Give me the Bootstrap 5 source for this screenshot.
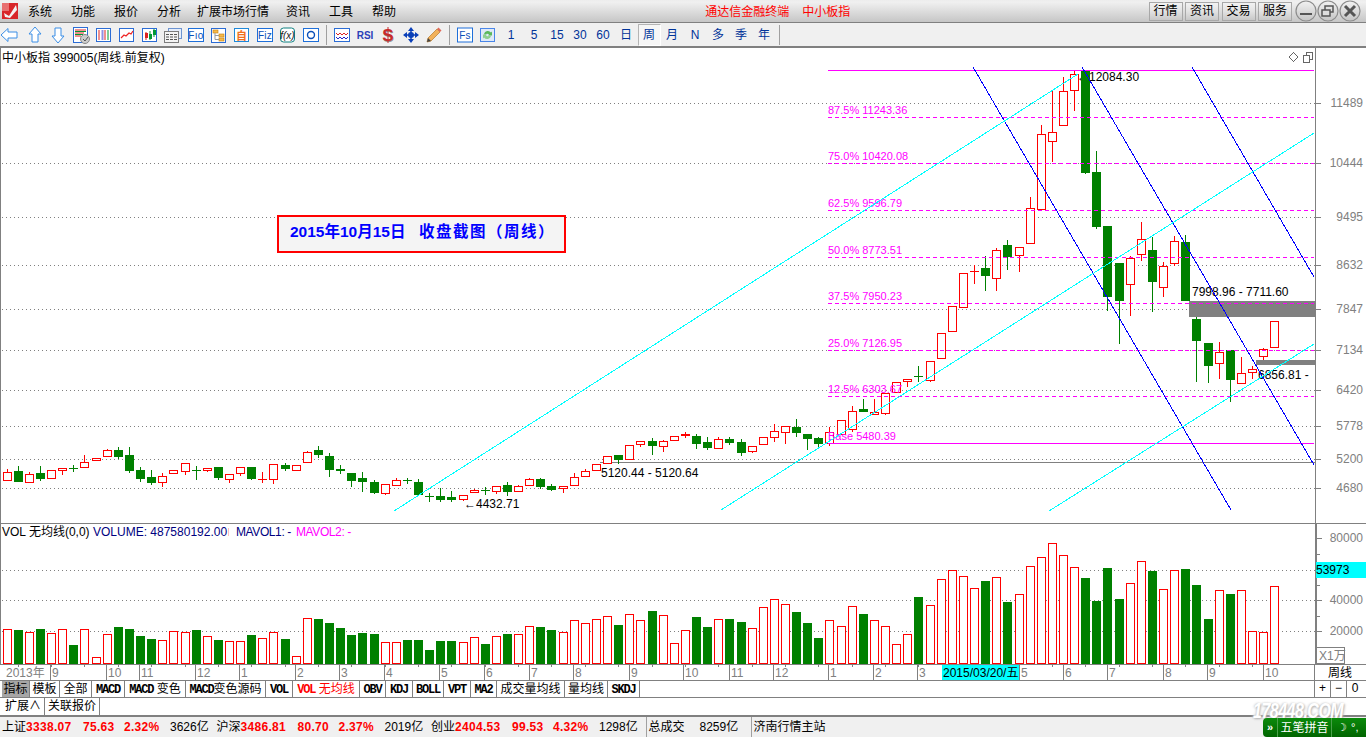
<!DOCTYPE html>
<html lang="zh-CN">
<head>
  <meta charset="UTF-8">
  <title>通达信金融终端 - 中小板指</title>
  <link href="https://cdn.jsdelivr.net/npm/bootstrap@5.3.2/dist/css/bootstrap.min.css" rel="stylesheet">
  <style>
    html, body { height: 737px; overflow: hidden; }
    body { font: 12px/1 "Liberation Sans", "Noto Sans CJK SC", sans-serif; color: #000; background: #fff; position: relative; }
    svg text { font-family: "Liberation Sans", "Noto Sans CJK SC", sans-serif; font-size: 12px; }
    .menu-strip { height: 23px; border-bottom: 1px solid #808080; background: linear-gradient(#ededed, #f0f0f0 10%, #c6c6c6); }
    .app-logo { width: 16px; margin: 0 10px 0 2px; }
    .menu-link { color: #000; text-decoration: none; margin-right: 19px; padding-top: 1px; }
    .menu-link.menu-wide { margin-left: -3px; margin-right: 17px; }
    .app-title { color: #f00; margin-left: 290px; gap: 13px; padding-top: 1px; }
    .skin-btn { width: 34px; height: 19px; margin-right: 2.5px; padding: 0; border: 1px solid #a8a8a8; border-radius: 0; font-size: 12px; line-height: 17px; color: #000; background: linear-gradient(#f2f2f2, #e2e2e2 50%, #c8c8c8); }
    .win-icons { margin-left: .5px; margin-right: 5px; }
    .tool-strip { height: 25px; padding: 1px 0 0 .5px; background: #f0f0f0; border-bottom: 2px solid #808080; }
    .tool-cell { width: 23px; height: 22px; color: #003399; font-size: 12px; flex: none; }
    .tool-cell svg { overflow: visible; }
    .tool-cell.cell-on { background: #f6f6f6; border: 1px solid #b4b4b4; border-right-color: #fff; border-bottom-color: #fff; }
    .tool-sep { width: 1px; height: 20px; background: #a0a0a0; margin: 0 3.5px; flex: none; }
    .pane-price { height: 476px; border-bottom: 1px solid #808080; }
    .pane-vol { height: 140px; }
    .pane-date { height: 17px; border-top: 1px solid #808080; border-bottom: 1px solid #808080; }
    .pane-price svg, .pane-vol svg, .pane-date svg { display: block; }
    .tab-row { height: 17px; border-bottom: 1px solid #808080; padding-left: 2px; background: #fff; }
    .tab-row.row-two { height: 18px; }
    .tab-cell { height: 100%; border-right: 1px solid #808080; text-align: center; line-height: 16px; white-space: nowrap; flex: none; }
    .tab-cell.tab-on { background: #a6a6a6; }
    .tab-cell.tab-red { color: #f00; }
    .tab-latin { font: bold 12px/16px "Liberation Mono", monospace; letter-spacing: -1.2px; }
    .zoom-btns { margin-left: auto; width: 52px; border-left: 1px solid #808080; }
    .zoom-btn { width: 16px; height: 100%; text-align: center; border-right: 1px solid #808080; line-height: 15px; }
    .status-strip { height: 22px; background: #f0f0f0; border-top: 1px solid #808080; padding-left: 2px; }
    .st-name { width: 24px; }
    .st-price { width: 57px; }
    .st-chg { width: 41px; }
    .st-pct { width: 46px; }
    .st-amt { width: 46.5px; }
    .st-price, .st-chg, .st-pct { color: #f00; font-weight: 700; letter-spacing: .3px; }
    .st-total { width: 54px; }
    .st-amt2 { width: 51px; }
    .st-div { border-left: 1px solid #a0a0a0; height: 100%; padding-left: 2px; display: flex; align-items: center; }
    .site-mark { position: absolute; left: 1253px; top: 701px; font: italic 700 16px/20px "Liberation Sans", sans-serif; letter-spacing: -.5px; color: #fff; white-space: nowrap; transform: scaleY(1.35); text-shadow: 1px 1px 2px #b0b0b0, -1px 0 2px #cfcfcf; }
    .ime-bar { position: absolute; left: 1263px; top: 718px; width: 103px; height: 19px; border-radius: 4px 0 0 4px; background: linear-gradient(#0b8a0b, #006400); color: #fff; }
    .ime-arrow { width: 15px; height: 100%; border-right: 1px solid #4aa04a; font-size: 11px; font-weight: 700; flex: none; }
    .ime-name { width: 54px; height: 100%; border-right: 1px solid #4aa04a; font-size: 12px; white-space: nowrap; flex: none; }
    .ime-moon { font-size: 11px; gap: 4px; padding-left: 5px; white-space: nowrap; }
    .fib-text { font-size: 11px; }
    .note-text { font-size: 15.5px; font-weight: 700; }
    .note-text.note-wide { letter-spacing: 1.5px; }
    .mavol-text { letter-spacing: -.4px; }
    .icon-label { font-size: 10px; letter-spacing: .3px; }
    .icon-cjk { font-size: 11px; font-weight: 700; }
    .icon-fx { font-size: 10px; font-style: italic; }
    .icon-rsi { font-size: 10px; font-weight: 700; }
    .icon-dollar { font-size: 17px; font-weight: 700; }
  </style>
</head>
<body class="d-flex flex-column">

  <div class="menu-strip d-flex align-items-center">
    <svg class="app-logo" width="16" height="16" viewBox="0 0 16 16"><rect width="16" height="16" fill="#d8262a"/><rect width="7" height="8" fill="#e87070"/><path d="M2 10 L7 13 L14 2 L15 7 L8 15 L3 14Z" fill="#f4f4f4"/></svg>
    <div class="d-flex">
      <a class="menu-link" href="#">系统</a><a class="menu-link" href="#">功能</a><a class="menu-link" href="#">报价</a><a class="menu-link" href="#">分析</a><a class="menu-link menu-wide" href="#">扩展市场行情</a><a class="menu-link" href="#">资讯</a><a class="menu-link" href="#">工具</a><a class="menu-link" href="#">帮助</a>
    </div>
    <div class="app-title d-flex"><span>通达信金融终端</span><span>中小板指</span></div>
    <div class="ms-auto d-flex align-items-center">
      <button class="btn skin-btn">行情</button><button class="btn skin-btn">资讯</button><button class="btn skin-btn">交易</button><button class="btn skin-btn">服务</button>
      <svg class="win-icons" width="66" height="22" viewBox="0 0 66 22">
        <g fill="url(#winfill)" stroke="#8c8c8c" stroke-width="1.2"><circle cx="11" cy="11" r="10"/><circle cx="33" cy="11" r="10"/><circle cx="55" cy="11" r="10"/></g>
        <defs><linearGradient id="winfill" x1="0" y1="0" x2="0" y2="1"><stop offset="0" stop-color="#f2f2f2"/><stop offset="1" stop-color="#c4c4c4"/></linearGradient></defs>
        <rect x="5" y="13" width="12" height="2" fill="#555"/>
        <g fill="none" stroke="#555" stroke-width="1.5"><rect x="30" y="6" width="8" height="6"/><rect x="27" y="10" width="8" height="6" fill="#ddd"/></g>
        <path d="M50 6 L60 16 M60 6 L50 16" stroke="#555" stroke-width="3"/>
      </svg>
    </div>
  </div>

  <div class="tool-strip d-flex align-items-center">
    <div class="tool-cell d-flex align-items-center justify-content-center"><svg width="20" height="20" viewBox="0 0 20 20"><polygon points="-1,10 6,3.5 6,7 15,7 15,13 6,13 6,16.5" fill="#fff" stroke="#3b8ee6"/></svg></div>
    <div class="tool-cell d-flex align-items-center justify-content-center"><svg width="20" height="20" viewBox="0 0 20 20"><polygon points="10,2 16,9 13,9 13,17 7,17 7,9 4,9" fill="#fff" stroke="#3b8ee6"/></svg></div>
    <div class="tool-cell d-flex align-items-center justify-content-center"><svg width="20" height="20" viewBox="0 0 20 20"><polygon points="10,18 16,11 13,11 13,3 7,3 7,11 4,11" fill="#fff" stroke="#3b8ee6"/></svg></div>
    <div class="tool-cell d-flex align-items-center justify-content-center"><svg width="20" height="20" viewBox="0 0 20 20"><rect x="2.5" y="2.5" width="14" height="15" fill="#fff" stroke="#2b6cd4"/><path d="M4 5h11M4 8h9M4 11h6" stroke="#d22" stroke-width="1"/><path d="M4 6.500h11M4 9.500h8" stroke="#093" stroke-width="1"/><circle cx="14" cy="14" r="4.5" fill="#ccc" stroke="#888"/><path d="M12 14l2 2 3-4" stroke="#555" fill="none"/></svg></div>
    <div class="tool-cell d-flex align-items-center justify-content-center"><svg width="20" height="20" viewBox="0 0 20 20"><rect x="2.5" y="3.5" width="14" height="13" fill="#fff" stroke="#2b6cd4"/><path d="M5 5.500v9" stroke="#d22" stroke-width="2" stroke-dasharray="1 1"/><path d="M8.500 5.500v9" stroke="#22c" stroke-width="2" stroke-dasharray="1 1"/><path d="M11 5.500v9" stroke="#d22" stroke-width="2" stroke-dasharray="1 1"/><path d="M14 5.500v9" stroke="#093" stroke-width="2" stroke-dasharray="1 1"/></svg></div>
    <div class="tool-cell d-flex align-items-center justify-content-center"><svg width="20" height="20" viewBox="0 0 20 20"><rect x="2.5" y="3.5" width="14" height="13" fill="#fff" stroke="#2b6cd4"/><path d="M4 13l3-3 2 1 3-3 2 1 2-3" fill="none" stroke="#e22" stroke-width="1.2"/></svg></div>
    <div class="tool-cell d-flex align-items-center justify-content-center"><svg width="20" height="20" viewBox="0 0 20 20"><rect x="2.5" y="3.5" width="14" height="13" fill="#fff" stroke="#2b6cd4"/><path d="M6 7v8" stroke="#d22"/><rect x="5" y="8" width="3" height="5" fill="#d22"/><path d="M10 6v9" stroke="#093"/><rect x="9" y="9" width="3" height="5" fill="#093"/><path d="M14 4v8" stroke="#093"/><rect x="13" y="5" width="3" height="5" fill="#093"/></svg></div>
    <div class="tool-cell d-flex align-items-center justify-content-center"><svg width="20" height="20" viewBox="0 0 20 20"><rect x="5.5" y="3.5" width="13" height="10" fill="#e6eefb" stroke="#6c93d0"/><rect x="1.5" y="6.5" width="14" height="11" fill="#f4f4f4" stroke="#7d7d7d"/><path d="M3 9.500h3M7 9.500h3M11 9.500h3M3 12h3M7 12h3M11 12h3M3 14.500h3M7 14.500h3M11 14.500h3" stroke="#555"/></svg></div>
    <div class="tool-cell d-flex align-items-center justify-content-center"><svg width="20" height="20" viewBox="0 0 20 20"><rect x="2.5" y="3.5" width="15" height="13" fill="#fff" stroke="#1e6fd9"/><text x="10" y="14" text-anchor="middle" fill="#0a4fb8" class="icon-label">Fıo</text></svg></div>
    <div class="tool-cell d-flex align-items-center justify-content-center"><svg width="20" height="20" viewBox="0 0 20 20"><rect x="2.5" y="3.5" width="14" height="14" fill="#fff" stroke="#2b6cd4"/><rect x="4" y="5" width="5" height="3" fill="#f7b94a" stroke="#c47f10" stroke-width=".6"/><rect x="10" y="9" width="5" height="3" fill="#f7b94a" stroke="#c47f10" stroke-width=".6"/><rect x="10" y="13" width="5" height="3" fill="#f7b94a" stroke="#c47f10" stroke-width=".6"/><path d="M6 8v6.500h4M6 10.500h4" fill="none" stroke="#999"/></svg></div>
    <div class="tool-cell d-flex align-items-center justify-content-center"><svg width="20" height="20" viewBox="0 0 20 20"><rect x="2.5" y="3.5" width="14" height="13" fill="#fff" stroke="#1e88d9"/><text x="9.5" y="14.5" text-anchor="middle" fill="#f0701e" class="icon-cjk">自</text></svg></div>
    <div class="tool-cell d-flex align-items-center justify-content-center"><svg width="20" height="20" viewBox="0 0 20 20"><rect x="2.5" y="3.5" width="15" height="13" fill="#fff" stroke="#1e6fd9"/><text x="10" y="14" text-anchor="middle" fill="#0a4fb8" class="icon-label">Fiz</text></svg></div>
    <div class="tool-cell d-flex align-items-center justify-content-center"><svg width="20" height="20" viewBox="0 0 20 20"><rect x="2.5" y="3" width="14" height="14" rx="3" fill="#fff" stroke="#0f8080"/><text x="9.5" y="14" text-anchor="middle" fill="#222" class="icon-fx">f(x)</text></svg></div>
    <div class="tool-cell d-flex align-items-center justify-content-center"><svg width="20" height="20" viewBox="0 0 20 20"><rect x="2.5" y="3.5" width="15" height="13" fill="#fff" stroke="#1e6fd9"/><circle cx="10" cy="10" r="3.5" fill="none" stroke="#0a4fb8" stroke-width="1.4"/></svg></div>
    <div class="tool-sep"></div>
    <div class="tool-cell d-flex align-items-center justify-content-center"><svg width="20" height="20" viewBox="0 0 20 20"><rect x="2.5" y="3.5" width="15" height="13" fill="#fff" stroke="#2b6cd4"/><path d="M4 8l2 2 2-2 2 2 2-2 2 2 2-2" fill="none" stroke="#d22"/><path d="M4 12l2 2 2-2 2 2 2-2 2 2 2-2" fill="none" stroke="#22c"/></svg></div>
    <div class="tool-cell d-flex align-items-center justify-content-center"><svg width="20" height="20" viewBox="0 0 20 20"><text x="10" y="14" text-anchor="middle" fill="#2b3fb8" class="icon-rsi">RSI</text></svg></div>
    <div class="tool-cell d-flex align-items-center justify-content-center"><svg width="20" height="20" viewBox="0 0 20 20"><text x="10.500" y="16.500" text-anchor="middle" fill="#909090" class="icon-dollar">S</text><text x="10" y="16" text-anchor="middle" fill="#c82a2a" class="icon-dollar">S</text><path d="M10 2v16" stroke="#c82a2a"/></svg></div>
    <div class="tool-cell d-flex align-items-center justify-content-center"><svg width="20" height="20" viewBox="0 0 20 20"><path d="M10 2l3 4h-6zM10 18l3-4h-6zM2 10l4-3v6zM18 10l-4-3v6z" fill="#0a3fb8"/><path d="M5 10h10M10 5v10" stroke="#0a3fb8" stroke-width="1.5"/><circle cx="10" cy="10" r="3" fill="#0a3fb8"/></svg></div>
    <div class="tool-cell d-flex align-items-center justify-content-center"><svg width="20" height="20" viewBox="0 0 20 20"><path d="M3 17l1-4L13 4l3 3-9 9z" fill="#f2b15a" stroke="#b87a2a" stroke-width=".7"/><path d="M13 4l1.500-1.500 3 3L16 7z" fill="#e06a5a"/><path d="M3 17l1-4 3 3z" fill="#444"/></svg></div>
    <div class="tool-sep"></div>
    <div class="tool-cell d-flex align-items-center justify-content-center"><svg width="20" height="20" viewBox="0 0 20 20"><rect x="2.5" y="3" width="15" height="14" fill="#fff" stroke="#1e6fd9"/><text x="10" y="14" text-anchor="middle" fill="#0a4fb8" class="icon-label">Fs</text></svg></div>
    <div class="tool-cell d-flex align-items-center justify-content-center"><svg width="20" height="20" viewBox="0 0 20 20"><rect x="2.5" y="3.5" width="14" height="13" fill="#dfe9f8" stroke="#4a86e8"/><path d="M6 9a4 4 0 0 1 7-1.500l1-1v4h-4l1-1a2.500 2.500 0 0 0-4 .5z" fill="#5cb85c"/><path d="M13 11a4 4 0 0 1-7 1.500l-1 1v-4h4l-1 1a2.500 2.500 0 0 0 4-.5z" fill="#8fd08f"/></svg></div>
    <div class="tool-cell d-flex align-items-center justify-content-center">1</div>
    <div class="tool-cell d-flex align-items-center justify-content-center">5</div>
    <div class="tool-cell d-flex align-items-center justify-content-center">15</div>
    <div class="tool-cell d-flex align-items-center justify-content-center">30</div>
    <div class="tool-cell d-flex align-items-center justify-content-center">60</div>
    <div class="tool-cell d-flex align-items-center justify-content-center">日</div>
    <div class="tool-cell cell-on d-flex align-items-center justify-content-center">周</div>
    <div class="tool-cell d-flex align-items-center justify-content-center">月</div>
    <div class="tool-cell d-flex align-items-center justify-content-center">N</div>
    <div class="tool-cell d-flex align-items-center justify-content-center">多</div>
    <div class="tool-cell d-flex align-items-center justify-content-center">季</div>
    <div class="tool-cell d-flex align-items-center justify-content-center">年</div>
    <div class="tool-sep"></div>
  </div>

  <div class="pane-price"><svg id="priceSvg" width="1366" height="475" viewBox="0 48 1366 475"></svg></div>
  <div class="pane-vol"><svg id="volSvg" width="1366" height="140" viewBox="0 524 1366 140"></svg></div>
  <div class="pane-date"><svg id="dateSvg" width="1366" height="15" viewBox="0 665 1366 15"></svg></div>

  <div id="tabsOne" class="tab-row d-flex"></div>
  <div id="tabsTwo" class="tab-row row-two d-flex"></div>

  <div class="status-strip d-flex align-items-center">
    <span class="st-name">上证</span><span class="st-price">3338.07</span><span class="st-chg">75.63</span><span class="st-pct">2.32%</span><span class="st-amt">3626亿</span>
    <span class="st-name">沪深</span><span class="st-price">3486.81</span><span class="st-chg">80.70</span><span class="st-pct">2.37%</span><span class="st-amt">2019亿</span>
    <span class="st-name">创业</span><span class="st-price">2404.53</span><span class="st-chg">99.53</span><span class="st-pct">4.32%</span><span class="st-amt">1298亿</span>
    <span class="st-div st-total">总成交</span><span class="st-amt2">8259亿</span>
    <span class="st-div">济南行情主站</span>
  </div>

  <div class="site-mark">178448.COM</div>
  <div class="ime-bar d-flex align-items-center">
    <span class="ime-arrow d-flex align-items-center justify-content-center">»</span>
    <span class="ime-name d-flex align-items-center justify-content-center">五笔拼音</span>
    <span class="ime-moon d-flex align-items-center"><span>☽</span><span>°,</span></span>
  </div>

  <script src="https://cdn.jsdelivr.net/npm/bootstrap@5.3.2/dist/js/bootstrap.bundle.min.js"></script>
  <script>
    // candles: colour, body top, body bottom, high, low (all in screen px)
    const candles = [
      ["r",472,480,469,480],["g",471,481,466,481],["r",474,482,472,482],["g",473,478,466,480],["r",470,478,470,478],
      ["r",468,470,468,474],["g",468,468,465,471],["r",462,467,455,467],["r",458,460,458,460],["r",450,456,449,456],
      ["g",450,456,447,458],["g",455,470,447,472],["g",470,478,467,481],["g",477,482,470,484],["r",476,482,473,486],
      ["r",470,473,470,473],["r",463,471,463,474],["g",470,470,466,479],["r",468,470,468,471],["g",467,477,467,479],
      ["r",474,479,474,482],["r",467,473,467,475],["g",467,478,467,479],["r",479,479,472,482],["r",464,479,464,483],
      ["g",465,468,463,470],["r",465,470,465,470],["r",452,462,451,462],["g",450,454,446,457],["g",456,469,453,476],
      ["g",469,470,465,473],["g",473,480,473,486],["g",478,481,472,491],["g",482,492,480,493],["r",484,493,484,494],
      ["r",480,485,478,485],["g",480,480,478,483],["g",482,494,479,494],["g",496,496,493,501],["g",496,499,488,501],
      ["g",497,499,491,501],["r",495,499,495,500],["r",490,492,489,492],["g",490,490,487,494],["r",486,491,486,493],
      ["g",485,491,482,495],["r",486,491,485,491],["r",479,485,478,485],["g",479,486,478,488],["g",486,489,484,490],
      ["r",486,488,486,492],["r",477,485,473,485],["r",471,476,469,476],["r",464,470,464,470],["r",456,463,456,463],
      ["g",455,459,455,463],["r",445,459,445,459],["r",441,444,441,446],["g",441,445,438,454],["r",441,446,440,451],
      ["r",436,440,436,440],["r",434,435,432,437],["g",436,443,434,448],["g",442,447,437,449],["r",439,448,437,448],
      ["g",439,442,437,444],["g",442,452,439,455],["r",446,451,446,452],["r",437,444,437,444],["r",431,437,424,441],
      ["r",426,432,426,443],["g",427,432,419,436],["g",434,438,434,449],["g",438,443,437,448],["r",432,443,427,445],
      ["r",420,434,420,434],["r",411,429,406,431],["g",409,411,399,411],["r",412,414,399,414],["r",393,413,393,414],
      ["r",382,392,382,392],["r",379,381,379,386],["g",376,376,366,381],["r",361,380,361,381],["r",333,358,333,358],
      ["r",306,331,306,331],["r",273,307,273,307],["r",271,271,265,283],["g",268,275,256,290],["r",250,278,248,290],
      ["g",245,256,240,269],["r",247,255,247,271],["r",208,243,197,243],["r",134,209,125,209],["r",132,141,90,161],
      ["r",91,125,77,125],["r",74,90,70,110],["g",70,172,70,173],["g",172,226,151,228],["g",226,296,226,310],
      ["g",263,300,263,343],["r",258,284,256,315],["r",239,254,222,260],["g",250,281,237,311],["r",266,287,262,296],
      ["r",241,263,236,265],["g",242,300,235,300],["g",319,340,317,381],["g",343,365,343,382],["r",352,363,342,378],
      ["g",350,379,350,401],["r",373,383,357,383],["r",369,372,366,378],["r",349,356,348,359],["r",321,347,321,347]
    ];
    const volTops = [
      629,630,632,629,633,629,645,629,657,634,627,629,636,639,640,631,632,630,636,640,641,641,635,638,632,
      639,656,618,619,623,628,635,633,634,642,642,640,640,650,641,641,642,637,644,636,
      634,634,626,627,630,632,620,623,619,616,625,614,620,611,615,643,630,617,627,619,619,622,628,607,599,604,612,623,638,620,626,606,614,620,626,644,
      634,597,605,579,570,576,588,581,577,602,594,566,557,543,555,567,578,601,568,599,583,561,571,589,570,569,585,619,590,594,590,631,632,586
    ];
    const RED = "#ff0000", GREEN = "#008000", GREY = "#808080", PINK = "#ff00ff", BLUE = "#0000ff", CYAN = "#00ffff";
    const cx = i => Math.round(6.6 + 11.12 * i);

    function line(x1, y1, x2, y2, color, extra) {
      return `<line x1="${x1}" y1="${y1}" x2="${x2}" y2="${y2}" stroke="${color}" shape-rendering="crispEdges" ${extra || ""}/>`;
    }
    function label(x, y, str, color, extra) {
      return `<text x="${x}" y="${y}" fill="${color}" ${extra || ""}>${str}</text>`;
    }
    function drawCandle(i) {
      const [c, top, bot, hi, lo] = candles[i];
      const x = cx(i), col = c === "r" ? RED : GREEN;
      let s = line(x + .5, hi, x + .5, lo + 1, col);
      if (top === bot) s += line(x - 4, top + .5, x + 5, top + .5, col);
      else if (c === "r") s += `<rect x="${x - 3.5}" y="${top + .5}" width="8" height="${bot - top}" fill="#fff" stroke="${RED}" shape-rendering="crispEdges"/>`;
      else s += `<rect x="${x - 4}" y="${top}" width="9" height="${bot - top + 1}" fill="${GREEN}" shape-rendering="crispEdges"/>`;
      return s;
    }

    // price pane, coordinates are page pixels
    const priceAxis = [[103,"11489"],[163,"10444"],[217,"9495"],[265,"8632"],[309,"7847"],[350,"7134"],[390,"6420"],[426,"5778"],[459,"5200"],[488,"4680"]];
    const fibs = [[117,"87.5% 11243.36"],[163,"75.0% 10420.08"],[210,"62.5% 9596.79"],[257,"50.0% 8773.51"],[303,"37.5% 7950.23"],[350,"25.0% 7126.95"],[396,"12.5% 6303.67"]];
    let p = line(.5, 48, .5, 523, GREY) + line(1315.5, 48, 1315.5, 523, GREY);
    priceAxis.forEach(([y, t]) => {
      p += line(2, y + .5, 1315, y + .5, GREY, 'stroke-dasharray="1 3"') + line(1315, y + .5, 1321, y + .5, GREY);
      p += label(1363, y + 4, t, GREY, 'text-anchor="end"');
    });
    p += label(2, 62, "中小板指 399005(周线.前复权)", "#000");
    p += `<path d="M1293.500 52.500l4.500 4.500-4.500 4.500-4.500-4.500z" fill="none" stroke="#666" shape-rendering="crispEdges"/>`;
    p += `<path d="M1303.500 55.500v7h6v-7zM1306.500 55.500v-3h6v7h-3" fill="none" stroke="#666" shape-rendering="crispEdges"/>`;
    p += line(600, 462.5, 1315, 462.5, GREY);
    p += `<rect x="1189" y="301" width="126" height="16" fill="${GREY}"/><rect x="1256" y="360" width="59" height="5" fill="${GREY}"/>`;
    p += label(1077, 81, "←12084.30", "#000");
    candles.forEach((_, i) => p += drawCandle(i));
    p += line(828, 70.5, 1314, 70.5, PINK);
    fibs.forEach(([y, t]) => {
      p += line(828, y + .5, 1314, y + .5, PINK, 'stroke-dasharray="4 3"');
      p += label(828, y - 3, t, PINK, 'class="fib-text"');
    });
    p += line(828, 443.5, 1314, 443.5, PINK);
    p += label(828, 440, "Base 5480.39", PINK, 'class="fib-text"');
    p += label(464, 508, "←4432.71", "#000");
    p += label(601, 477, "5120.44 - 5120.64", "#000");
    p += label(1192, 296, "7998.96 - 7711.60", "#000");
    p += label(1258, 379, "6856.81 -", "#000");
    p += line(973, 67, 1231, 510, BLUE) + line(1082, 67, 1314, 465, BLUE) + line(1192, 67, 1314, 277, BLUE);
    p += line(394, 511, 1078, 74, CYAN) + line(721, 510, 1314, 133, CYAN) + line(1049, 511, 1314, 344, CYAN);
    p += `<rect x="278" y="216" width="287" height="36" fill="#f4f4f4" stroke="${RED}" stroke-width="2"/>`;
    p += label(290, 237, "2015年10月15日", BLUE, 'class="note-text"');
    p += label(419, 237, "收盘截图（周线）", BLUE, 'class="note-text note-wide"');
    document.getElementById("priceSvg").innerHTML = p;

    // volume pane
    let v = line(.5, 524, .5, 664, GREY) + line(1315.5, 524, 1315.5, 664, GREY) + line(1316.5, 524, 1316.5, 664, GREY);
    [570, 600, 631].forEach(y => v += line(2, y + .5, 1315, y + .5, GREY, 'stroke-dasharray="1 3"'));
    [[538,"80000"],[600,"40000"],[631,"20000"]].forEach(([y, t]) => {
      v += line(1316, y + .5, 1322, y + .5, GREY) + label(1363, y + 4, t, GREY, 'text-anchor="end"');
    });
    [554, 569, 585, 616].forEach(y => v += line(1316, y + .5, 1320, y + .5, GREY));
    volTops.forEach((top, i) => {
      const x = cx(i);
      v += candles[i][0] === "r"
        ? `<rect x="${x - 3.5}" y="${top + .5}" width="8" height="${663 - top}" fill="#fff" stroke="${RED}" shape-rendering="crispEdges"/>`
        : `<rect x="${x - 4}" y="${top}" width="9" height="${664 - top}" fill="${GREEN}" shape-rendering="crispEdges"/>`;
    });
    v += label(2, 536, "VOL 无均线(0,0)", "#000");
    v += label(93, 536, "VOLUME: 487580192.00", "#000080");
    v += line(228.5, 528, 228.5, 536, "#ffc0c0");
    v += label(236, 536, "MAVOL1: -", "#000080", 'class="mavol-text"');
    v += label(296, 536, "MAVOL2: -", PINK, 'class="mavol-text"');
    v += `<rect x="1316" y="562" width="50" height="16" fill="${CYAN}"/>` + label(1316, 574, "53973", "#000");
    v += `<rect x="1316.500" y="647.500" width="28" height="16" fill="#fff" stroke="${GREY}"/>` + label(1319, 660, "X1万", GREY);
    document.getElementById("volSvg").innerHTML = v;

    // date axis
    const months = [[50,"9"],[106,"10"],[139,"11"],[195,"12"],[239,"1"],[295,"2"],[339,"3"],[384,"4"],[439,"5"],[484,"6"],[529,"7"],[573,"8"],[629,"9"],[683,"10"],[729,"11"],[773,"12"],[828,"1"],[873,"2"],[917,"3"],[1019,"5"],[1063,"6"],[1107,"7"],[1163,"8"],[1207,"9"],[1263,"10"]];
    let d = label(6, 677, "2013年", GREY);
    for (let i = 1; i < 115; i += 3) d += line(cx(i) + .5, 665, cx(i) + .5, 667, GREY);
    months.forEach(([x, t]) => d += line(x + .5, 665, x + .5, 680, GREY) + label(x + 2, 677, t, GREY));
    d += `<rect x="942" y="665" width="77" height="15" fill="${CYAN}"/>` + label(943, 677, "2015/03/20/五", "#000");
    d += line(1314.5, 665, 1314.5, 680, GREY) + label(1340, 677, "周线", "#000", 'text-anchor="middle"');
    document.getElementById("dateSvg").innerHTML = d;

    // indicator tabs
    const tabsOne = [["指标",28,"tab-on"],["模板",30],["全部",32],["MACD",33],["MACD 变色",61],["MACD变色源码",80],["VOL",27],["VOL 无均线",67,"tab-red"],["OBV",26],["KDJ",27],["BOLL",31],["VPT",27],["MA2",26],["成交量均线",68],["量均线",43],["SKDJ",32]];
    const tabsTwo = [["扩展∧",43],["关联报价",55]];
    const tabHtml = ([t, w, cls]) => `<div class="tab-cell ${cls || ""}" style="width:${w}px">${t.replace(/[A-Z0-9]+/g, '<span class="tab-latin">$&</span>')}</div>`;
    document.getElementById("tabsOne").innerHTML = tabsOne.map(tabHtml).join("") +
      '<div class="zoom-btns d-flex"><div class="zoom-btn">+</div><div class="zoom-btn">−</div><div class="zoom-btn border-0">0</div></div>';
    document.getElementById("tabsTwo").innerHTML = tabsTwo.map(tabHtml).join("");
  </script>
</body>
</html>
